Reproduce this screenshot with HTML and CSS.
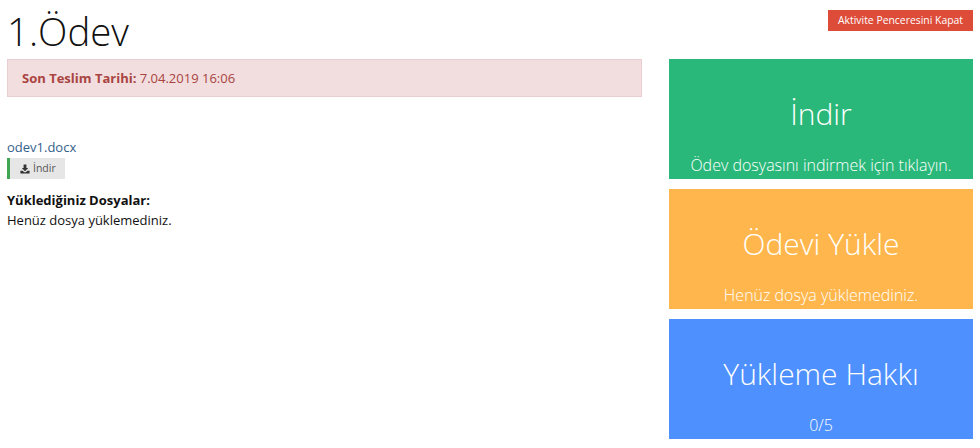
FILE: index.html
```html
<!DOCTYPE html>
<html lang="tr">
<head>
<meta charset="utf-8">
<title>1.Ödev</title>
<link rel="stylesheet" href="styles.css">
</head>
<body>
<div class="page">
  <header class="top">
    <h1 class="title">1.Ödev</h1>
    <a class="close" href="#">Aktivite Penceresini Kapat</a>
  </header>
  <div class="columns">
    <main class="main">
      <div class="alert"><strong>Son Teslim Tarihi:</strong> 7.04.2019 16:06</div>
      <a class="file" href="#">odev1.docx</a>
      <a class="download" href="#">
        <svg class="icon" viewBox="0 0 12 12" width="12" height="12"><path d="M4.3 0.5h3.4v4.2h2.2L6 8.6 2.1 4.7h2.2z"/><path d="M0.5 8.2h2.7L5 10h2l1.8-1.8h2.7v3.3H0.5z"/></svg>
        <span>İndir</span>
      </a>
      <div class="uploads">
        <strong>Yüklediğiniz Dosyalar:</strong>
        <p>Henüz dosya yüklemediniz.</p>
      </div>
    </main>
    <aside class="side">
      <a class="tile green" href="#"><span class="big">İndir</span><span class="small">Ödev dosyasını indirmek için tıklayın.</span></a>
      <a class="tile orange" href="#"><span class="big">Ödevi Yükle</span><span class="small">Henüz dosya yüklemediniz.</span></a>
      <a class="tile blue" href="#"><span class="big">Yükleme Hakkı</span><span class="small">0/5</span></a>
    </aside>
  </div>
</div>
</body>
</html>
```
FILE: styles.css
```css
* { box-sizing: border-box; }
html, body { margin: 0; padding: 0; background: #fff; }
body { font-family: "Open Sans", sans-serif; font-size: 13px; line-height: 19px; color: #111; overflow: hidden; }
a { text-decoration: none; }
.page { width: 980px; height: 448px; padding: 0 7px; }
.top { display: flex; justify-content: space-between; align-items: flex-start; height: 59px; }
.title { margin: 0; font-size: 38.4px; font-weight: 300; line-height: 62px; color: #111; }
.close { margin-top: 10px; width: 145px; height: 21px; background: #dd4b39; color: #fff; font-size: 10.4px; line-height: 21px; text-align: center; }
.columns { display: flex; gap: 27px; align-items: flex-start; }
.main { width: 635px; }
.alert { height: 38px; padding: 0 14px; background: #f2dede; border: 1px solid #ebccd1; color: #a94442; line-height: 36px; }
.file { display: block; margin-top: 41px; color: #34608a; line-height: 19px; }
.download { display: flex; align-items: center; width: 58px; height: 21px; margin-top: 1px; padding-left: 10px; gap: 3px; background: #e6e6e6; border-left: 3px solid #3fa753; color: #555; font-size: 10.5px; }
.icon { fill: #333; width: 10px; height: 10px; }
.uploads { margin-top: 11px; line-height: 20px; }
.uploads p { margin: 0; }
.side { width: 304px; display: flex; flex-direction: column; gap: 10px; }
.tile { height: 120px; display: flex; flex-direction: column; align-items: center; color: #fff; font-weight: 300; }
.big { font-size: 30px; line-height: 44px; margin-top: 33px; }
.small { font-size: 16px; line-height: 22px; margin-top: 18px; }
.green { background: #2ab87a; }
.orange { background: #ffb74d; }
.blue { background: #4d90fe; }
```
